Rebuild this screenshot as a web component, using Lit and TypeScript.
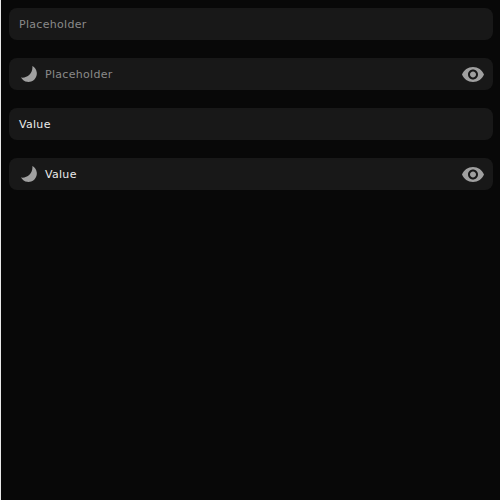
import { LitElement, html, css, svg } from "lit";
import { customElement, property } from "lit/decorators.js";

const moon = html`<svg class="moon" viewBox="0 0 16 16" width="16" height="16">
  ${svg`<path d="M11.3 0A8.45 8.45 0 1 1 0 11.6C6.3 12.6 12.4 6.8 11.3 0Z" />`}
</svg>`;

const eye = html`<svg class="eye" viewBox="0 0 24 24" width="24" height="24">
  ${svg`<path d="M12 4.5C7 4.5 2.73 7.61 1 12c1.73 4.39 6 7.5 11 7.5s9.27-3.11 11-7.5c-1.73-4.39-6-7.5-11-7.5zM12 17c-2.76 0-5-2.24-5-5s2.24-5 5-5 5 2.24 5 5-2.24 5-5 5zm0-8c-1.66 0-3 1.34-3 3s1.34 3 3 3 3-1.34 3-3-1.34-3-3-3z" />`}
</svg>`;

@customElement("text-field")
export class TextField extends LitElement {
  @property() value = "";
  @property({ type: Boolean }) icons = false;

  static styles = css`
    :host { display: block; }
    .field {
      display: flex;
      align-items: center;
      box-sizing: border-box;
      height: 32px;
      padding: 0 8px 0 10px;
      border-radius: 8px;
      background: #181818;
      color: #ebebeb;
      font: 11px/16px "DejaVu Sans", sans-serif;
      letter-spacing: 0.3px;
    }
    .text { flex: 1; padding-top: 2px; }
    .placeholder { color: #8a8a8a; }
    svg { display: block; fill: #a0a0a0; flex: none; }
    .moon { margin: 0 8px 0 2px; }
    .eye path { transform: translateY(0.5px); }
  `;

  render() {
    return html`<div class="field">
      ${this.icons ? moon : ""}
      <span class="text ${this.value ? "" : "placeholder"}">${this.value || "Placeholder"}</span>
      ${this.icons ? eye : ""}
    </div>`;
  }
}

@customElement("app-root")
export class AppRoot extends LitElement {
  static styles = css`
    :host { display: block; }
    .page {
      display: flex;
      flex-direction: column;
      gap: 18px;
      box-sizing: border-box;
      height: 500px;
      padding: 8px 7px 8px 8px;
      border-left: 1px solid #e8e8e8;
      background: #080808;
    }
  `;

  render() {
    return html`<div class="page">
      <text-field></text-field>
      <text-field icons></text-field>
      <text-field value="Value"></text-field>
      <text-field value="Value" icons></text-field>
    </div>`;
  }
}
